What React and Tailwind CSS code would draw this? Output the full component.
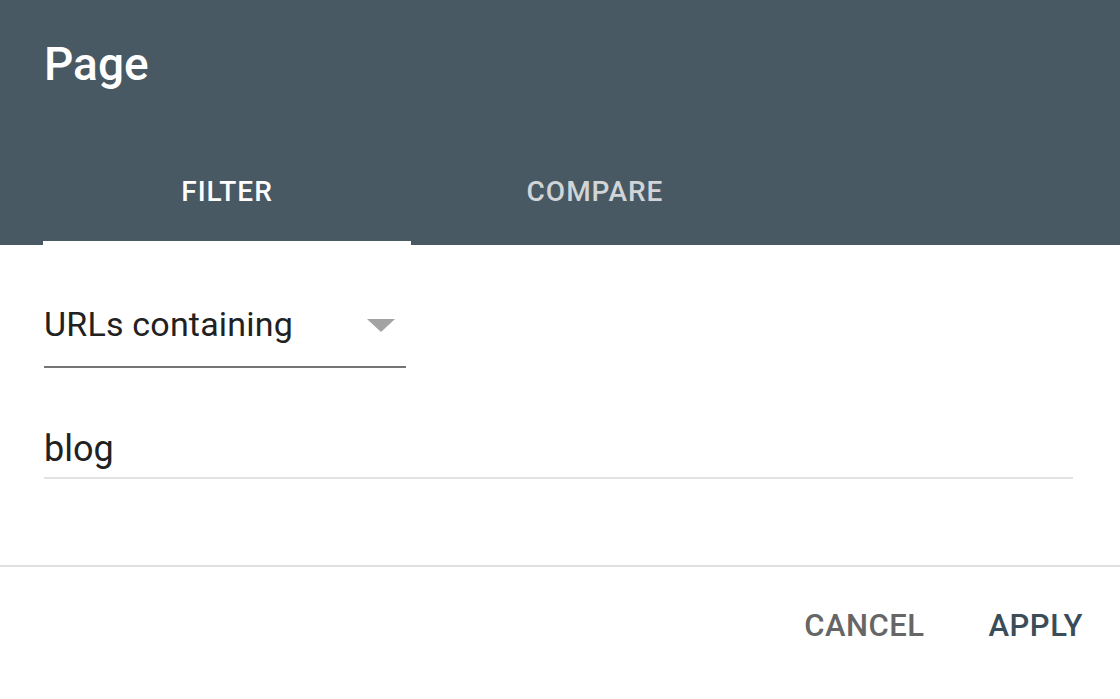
import React from 'react';

const App = () => {
  return (
    <div className="w-[1120px] h-[699px] bg-white overflow-hidden" style={{ fontFamily: 'Roboto, "Noto Sans", sans-serif' }}>
      {/* Header */}
      <div className="bg-[#485963] h-[245px] flex flex-col">
        <div className="h-[139px] pl-[44px] pt-[36px]">
          <h1 className="text-[46px] leading-[56px] font-medium text-white">Page</h1>
        </div>
        <div className="flex flex-1 pl-[43px]">
          <div className="w-[368px] flex flex-col">
            <div className="flex-1 flex items-center justify-center text-[28px] font-medium text-white tracking-[1px] pt-[4px]">FILTER</div>
            <div className="h-[4px] bg-white" />
          </div>
          <div className="w-[368px] flex flex-col">
            <div className="flex-1 flex items-center justify-center text-[28px] font-medium text-white/75 tracking-[1px] pt-[4px]">COMPARE</div>
            <div className="h-[4px]" />
          </div>
        </div>
      </div>

      {/* Body */}
      <div className="h-[320px] px-[44px] pt-[55px]">
        <div className="w-[362px] h-[68px] border-b-2 border-[#757575] flex items-start justify-between">
          <span className="text-[34px] leading-[48px] text-[#212121] tracking-[0.2px]">URLs containing</span>
          <svg width="28" height="14" viewBox="0 0 28 14" className="mt-[19px] mr-[11px]">
            <path d="M0 0 L28 0 L14 13 Z" fill="#a3a3a3" />
          </svg>
        </div>
        <div className="w-[1029px] h-[111px] border-b-2 border-[#e2e2e2] flex items-end pb-[3px]">
          <span className="text-[36px] leading-[50px] text-[#212121]">blog</span>
        </div>
      </div>

      {/* Footer */}
      <div className="border-t-2 border-[#e0e0e0] flex justify-end items-center gap-[64px] pr-[37px] h-[120px]">
        <button className="text-[31px] font-medium text-[#666666] tracking-[0.5px]">CANCEL</button>
        <button className="text-[31px] font-medium text-[#3a4d59] tracking-[0.5px]">APPLY</button>
      </div>
    </div>
  );
};

export default App;
